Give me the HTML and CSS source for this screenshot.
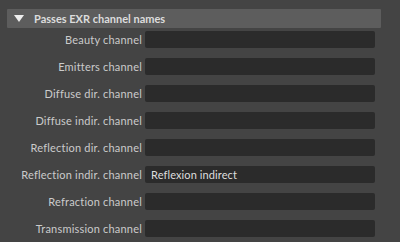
FILE: index.html
```html
<html>
	<head>
		<link rel="stylesheet" href="styles.css">
	</head>
	<body>
		<div class="panel">
			<div class="header">
				<span class="arrow"></span>
				Passes EXR channel names
			</div>
			<div class="rows">
				<div class="label">Beauty channel</div>
				<div class="field"></div>
				<div class="label">Emitters channel</div>
				<div class="field"></div>
				<div class="label">Diffuse dir. channel</div>
				<div class="field"></div>
				<div class="label">Diffuse indir. channel</div>
				<div class="field"></div>
				<div class="label">Reflection dir. channel</div>
				<div class="field"></div>
				<div class="label">Reflection indir. channel</div>
				<div class="field">Reflexion indirect</div>
				<div class="label">Refraction channel</div>
				<div class="field"></div>
				<div class="label">Transmission channel</div>
				<div class="field"></div>
			</div>
		</div>
	</body>
</html>
```
FILE: styles.css
```css
body{
	margin: 0;
	background: #444444;
	font-family: "Lato", "Open Sans", sans-serif;
	color: #cbcbcb;
	font-size: 11px;
	height: 242px;
	overflow: hidden;
}
.panel{
	padding: 9px 0 0 7px;
	width: 374px;
}
.header{
	height: 19px;
	background: #5d5d5d;
	display: flex;
	align-items: center;
	font-weight: bold;
	color: #dcdcdc;
	border-radius: 1px;
}
.arrow{
	width: 0;
	height: 0;
	border-left: 5px solid transparent;
	border-right: 5px solid transparent;
	border-top: 7px solid #eeeeee;
	margin: 0 10px 0 7px;
}
.rows{
	display: grid;
	grid-template-columns: 135px 230px;
	column-gap: 3px;
	row-gap: 10px;
	padding-top: 3px;
}
.label{
	text-align: right;
	height: 17px;
	line-height: 17px;
	white-space: nowrap;
	letter-spacing: 0.2px;
}
.field{
	height: 17px;
	line-height: 17px;
	background: #2b2b2b;
	border-radius: 2px;
	padding-left: 6px;
	color: #dedede;
	box-sizing: border-box;
	letter-spacing: 0.1px;
}
```
